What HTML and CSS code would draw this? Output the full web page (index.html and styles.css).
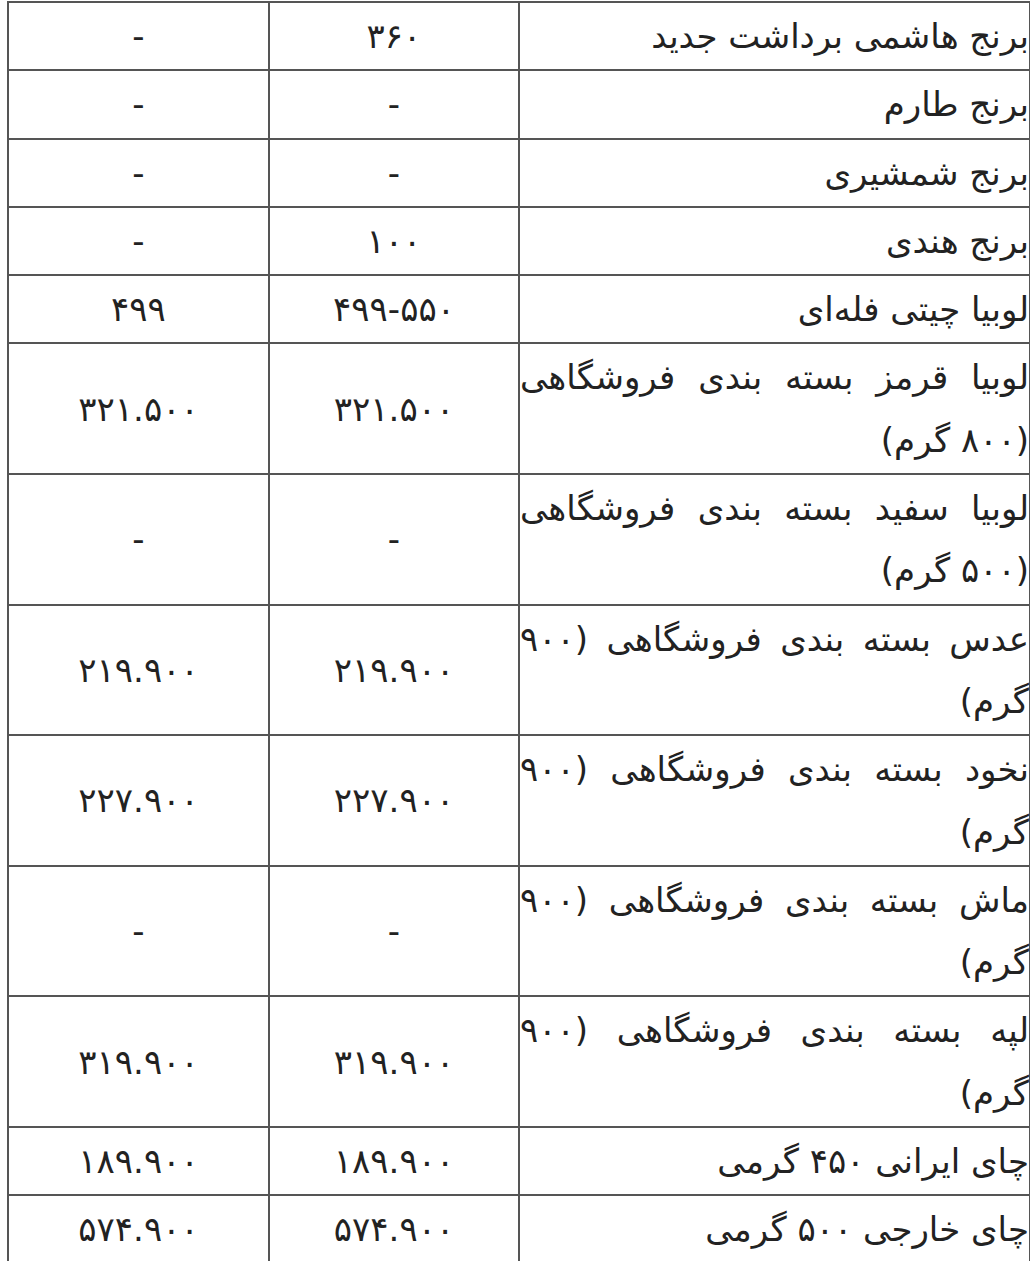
FILE: index.html
```html
<!DOCTYPE html>
<html lang="fa">
<head>
<meta charset="utf-8">
<title>قیمت</title>
<link rel="stylesheet" href="styles.css">
</head>
<body>
<table class="price-table" dir="rtl">
  <colgroup>
    <col class="c-name">
    <col class="c-mid">
    <col class="c-last">
  </colgroup>
  <tbody>
    <tr><td class="name">برنج هاشمی برداشت جدید</td><td class="num">۳۶۰</td><td class="num">-</td></tr>
    <tr><td class="name">برنج طارم</td><td class="num">-</td><td class="num">-</td></tr>
    <tr><td class="name">برنج شمشیری</td><td class="num">-</td><td class="num">-</td></tr>
    <tr><td class="name">برنج هندی</td><td class="num">۱۰۰</td><td class="num">-</td></tr>
    <tr><td class="name">لوبیا چیتی فله‌ای</td><td class="num">۴۹۹-۵۵۰</td><td class="num">۴۹۹</td></tr>
    <tr><td class="name">لوبیا قرمز بسته بندی فروشگاهی (۸۰۰ گرم)</td><td class="num">۳۲۱.۵۰۰</td><td class="num">۳۲۱.۵۰۰</td></tr>
    <tr><td class="name">لوبیا سفید بسته بندی فروشگاهی (۵۰۰ گرم)</td><td class="num">-</td><td class="num">-</td></tr>
    <tr><td class="name">عدس بسته بندی فروشگاهی (۹۰۰ گرم)</td><td class="num">۲۱۹.۹۰۰</td><td class="num">۲۱۹.۹۰۰</td></tr>
    <tr><td class="name">نخود بسته بندی فروشگاهی (۹۰۰ گرم)</td><td class="num">۲۲۷.۹۰۰</td><td class="num">۲۲۷.۹۰۰</td></tr>
    <tr><td class="name">ماش بسته بندی فروشگاهی (۹۰۰ گرم)</td><td class="num">-</td><td class="num">-</td></tr>
    <tr><td class="name">لپه بسته بندی فروشگاهی (۹۰۰ گرم)</td><td class="num">۳۱۹.۹۰۰</td><td class="num">۳۱۹.۹۰۰</td></tr>
    <tr><td class="name">چای ایرانی ۴۵۰ گرمی</td><td class="num">۱۸۹.۹۰۰</td><td class="num">۱۸۹.۹۰۰</td></tr>
    <tr><td class="name">چای خارجی ۵۰۰ گرمی</td><td class="num">۵۷۴.۹۰۰</td><td class="num">۵۷۴.۹۰۰</td></tr>
  </tbody>
</table>
</body>
</html>
```
FILE: styles.css
```css
html, body {
  margin: 0;
  padding: 0;
  background: #fff;
}
body {
  padding: 1px 0 0 7px;
  font-family: "DejaVu Sans", sans-serif;
  color: #222;
  overflow: hidden;
}
.price-table {
  table-layout: fixed;
  border-collapse: separate;
  border-spacing: 0;
  width: 1023px;
  border-top: 1px solid #555;
  border-left: 1px solid #555;
  font-size: 34px;
}
.c-name { width: 511px; }
.c-mid { width: 250px; }
.c-last { width: 261px; }
.price-table td {
  border: 1px solid #555;
  padding: 2px 0;
  line-height: 62.3px;
  vertical-align: middle;
}
.name {
  text-align: justify;
}
.num {
  text-align: center;
}
```
